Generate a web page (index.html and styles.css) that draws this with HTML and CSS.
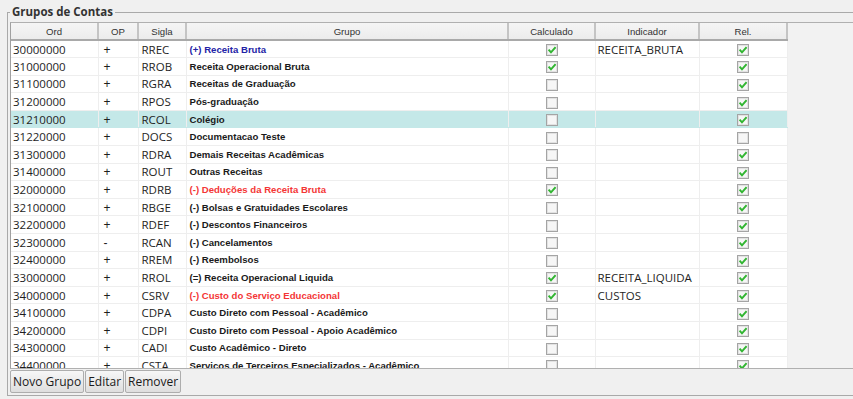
FILE: index.html
```html
<!DOCTYPE html>
<html lang="pt-BR">
<head>
<meta charset="utf-8">
<title>Grupos de Contas</title>
<link rel="stylesheet" href="styles.css">
</head>
<body>
<fieldset class="group">
  <legend class="group-title">Grupos de Contas</legend>
  <div class="scroll">
    <table class="grid">
      <colgroup>
        <col class="c-ord"><col class="c-op"><col class="c-sigla"><col class="c-grupo"><col class="c-calc"><col class="c-ind"><col class="c-rel">
      </colgroup>
      <thead>
        <tr><th>Ord</th><th>OP</th><th>Sigla</th><th>Grupo</th><th>Calculado</th><th>Indicador</th><th>Rel.</th></tr>
      </thead>
      <tbody>
        <tr><td class="ord">30000000</td><td class="op">+</td><td class="sig">RREC</td><td class="grp blue">(+) Receita Bruta</td><td class="chk"><span class="cb on"></span></td><td class="ind">RECEITA_BRUTA</td><td class="chk"><span class="cb on"></span></td></tr>
        <tr><td class="ord">31000000</td><td class="op">+</td><td class="sig">RROB</td><td class="grp">Receita Operacional Bruta</td><td class="chk"><span class="cb on"></span></td><td class="ind"></td><td class="chk"><span class="cb on"></span></td></tr>
        <tr><td class="ord">31100000</td><td class="op">+</td><td class="sig">RGRA</td><td class="grp">Receitas de Graduação</td><td class="chk"><span class="cb"></span></td><td class="ind"></td><td class="chk"><span class="cb on"></span></td></tr>
        <tr><td class="ord">31200000</td><td class="op">+</td><td class="sig">RPOS</td><td class="grp">Pós-graduação</td><td class="chk"><span class="cb"></span></td><td class="ind"></td><td class="chk"><span class="cb on"></span></td></tr>
        <tr class="sel"><td class="ord">31210000</td><td class="op">+</td><td class="sig">RCOL</td><td class="grp">Colégio</td><td class="chk"><span class="cb"></span></td><td class="ind"></td><td class="chk"><span class="cb on"></span></td></tr>
        <tr><td class="ord">31220000</td><td class="op">+</td><td class="sig">DOCS</td><td class="grp">Documentacao Teste</td><td class="chk"><span class="cb"></span></td><td class="ind"></td><td class="chk"><span class="cb"></span></td></tr>
        <tr><td class="ord">31300000</td><td class="op">+</td><td class="sig">RDRA</td><td class="grp">Demais Receitas Acadêmicas</td><td class="chk"><span class="cb"></span></td><td class="ind"></td><td class="chk"><span class="cb on"></span></td></tr>
        <tr><td class="ord">31400000</td><td class="op">+</td><td class="sig">ROUT</td><td class="grp">Outras Receitas</td><td class="chk"><span class="cb"></span></td><td class="ind"></td><td class="chk"><span class="cb on"></span></td></tr>
        <tr><td class="ord">32000000</td><td class="op">+</td><td class="sig">RDRB</td><td class="grp red">(-) Deduções da Receita Bruta</td><td class="chk"><span class="cb on"></span></td><td class="ind"></td><td class="chk"><span class="cb on"></span></td></tr>
        <tr><td class="ord">32100000</td><td class="op">+</td><td class="sig">RBGE</td><td class="grp">(-) Bolsas e Gratuidades Escolares</td><td class="chk"><span class="cb"></span></td><td class="ind"></td><td class="chk"><span class="cb on"></span></td></tr>
        <tr><td class="ord">32200000</td><td class="op">+</td><td class="sig">RDEF</td><td class="grp">(-) Descontos Financeiros</td><td class="chk"><span class="cb"></span></td><td class="ind"></td><td class="chk"><span class="cb on"></span></td></tr>
        <tr><td class="ord">32300000</td><td class="op">-</td><td class="sig">RCAN</td><td class="grp">(-) Cancelamentos</td><td class="chk"><span class="cb"></span></td><td class="ind"></td><td class="chk"><span class="cb on"></span></td></tr>
        <tr><td class="ord">32400000</td><td class="op">+</td><td class="sig">RREM</td><td class="grp">(-) Reembolsos</td><td class="chk"><span class="cb"></span></td><td class="ind"></td><td class="chk"><span class="cb on"></span></td></tr>
        <tr><td class="ord">33000000</td><td class="op">+</td><td class="sig">RROL</td><td class="grp">(=) Receita Operacional Liquida</td><td class="chk"><span class="cb on"></span></td><td class="ind">RECEITA_LIQUIDA</td><td class="chk"><span class="cb on"></span></td></tr>
        <tr><td class="ord">34000000</td><td class="op">+</td><td class="sig">CSRV</td><td class="grp red">(-) Custo do Serviço Educacional</td><td class="chk"><span class="cb on"></span></td><td class="ind">CUSTOS</td><td class="chk"><span class="cb on"></span></td></tr>
        <tr><td class="ord">34100000</td><td class="op">+</td><td class="sig">CDPA</td><td class="grp">Custo Direto com Pessoal - Acadêmico</td><td class="chk"><span class="cb"></span></td><td class="ind"></td><td class="chk"><span class="cb on"></span></td></tr>
        <tr><td class="ord">34200000</td><td class="op">+</td><td class="sig">CDPI</td><td class="grp">Custo Direto com Pessoal - Apoio Acadêmico</td><td class="chk"><span class="cb"></span></td><td class="ind"></td><td class="chk"><span class="cb on"></span></td></tr>
        <tr><td class="ord">34300000</td><td class="op">+</td><td class="sig">CADI</td><td class="grp">Custo Acadêmico - Direto</td><td class="chk"><span class="cb"></span></td><td class="ind"></td><td class="chk"><span class="cb on"></span></td></tr>
        <tr><td class="ord">34400000</td><td class="op">+</td><td class="sig">CSTA</td><td class="grp">Servicos de Terceiros Especializados - Acadêmico</td><td class="chk"><span class="cb"></span></td><td class="ind"></td><td class="chk"><span class="cb on"></span></td></tr>
      </tbody>
    </table>
  </div>
  <div class="buttons">
    <button class="btn" type="button">Novo Grupo</button>
    <button class="btn" type="button">Editar</button>
    <button class="btn" type="button">Remover</button>
  </div>
</fieldset>
</body>
</html>
```
FILE: styles.css
```css
html, body {
  margin: 0;
  padding: 0;
  background: #f0f0f0;
  overflow: hidden;
  width: 853px;
  height: 399px;
  font-family: "Open Sans", "Noto Sans", sans-serif;
  color: #1e1e1e;
}

.group {
  margin: 4px 0 0 7px;
  padding: 2px 0 1px 2px;
  width: 880px;
  box-sizing: border-box;
  border: 1px solid #a9a9a9;
  min-inline-size: 0;
}

.group-title {
  padding: 0 2px;
  font-family: "Open Sans", sans-serif;
  font-weight: 700;
  font-size: 11.5px;
  line-height: 16px;
  color: #333;
}

.scroll {
  height: 347px;
  box-sizing: border-box;
  border: 1px solid #b0b0b0;
  border-left-color: #a0a0a0;
  overflow: hidden;
  background: #f2f2f2;
}

.grid {
  border-collapse: collapse;
  table-layout: fixed;
  width: 776px;
}

.c-ord { width: 87px; }
.c-op { width: 40px; }
.c-sigla { width: 48px; }
.c-grupo { width: 322px; }
.c-calc { width: 87px; }
.c-ind { width: 104px; }
.c-rel { width: 88px; }

.grid th {
  height: 17px;
  padding: 0;
  box-sizing: border-box;
  background: linear-gradient(#f5f5f5, #ececec);
  border-right: 2px solid #c4c4c4;
  border-bottom: 2px solid #a9a9a9;
  font-family: "Liberation Sans", Arial, sans-serif;
  font-weight: 400;
  font-size: 9.6px;
  color: #333;
  text-align: center;
  vertical-align: middle;
}

.grid td {
  height: 17.6px;
  padding: 1px 0 0;
  box-sizing: border-box;
  background: #fff;
  border-right: 1px solid #eeeeee;
  border-bottom: 1px solid #eeeeee;
  font-size: 11.5px;
  line-height: 14px;
  white-space: nowrap;
  overflow: hidden;
  vertical-align: middle;
  color: #1e1e1e;
}

.grid tr.sel td {
  background: #c4e8e8;
  border-bottom-color: #c4e8e8;
}

.grid td.ord { padding-left: 2px; }
.grid td.op {
  padding-left: 5px;
  font-family: "Liberation Sans", Arial, sans-serif;
  font-size: 12px;
  color: #1e1e1e;
}
.grid td.sig { padding-left: 3px; }
.grid td.ind { padding-left: 2px; }

.grid td.grp {
  padding-left: 3px;
  font-family: "Liberation Sans", Arial, sans-serif;
  font-weight: 700;
  font-size: 9.6px;
  color: #1a1a1a;
}

.grid td.grp.blue { color: #2323a6; }
.grid td.grp.red { color: #f43636; }

.grid td.chk { text-align: center; padding-top: 0; }

.cb {
  display: inline-block;
  width: 12px;
  height: 12px;
  box-sizing: border-box;
  border: 1px solid #a4a4a4;
  box-shadow: inset 0 0 0 1px #e2e2e2;
  background: #f6f6f6;
  vertical-align: middle;
}

.cb.on {
  background: #f6f6f6 url("data:image/svg+xml;utf8,<svg xmlns='http://www.w3.org/2000/svg' width='10' height='10' viewBox='0 0 10 10'><path d='M1.6 4.6 L4 7.3 L8.6 2.2' fill='none' stroke='%2331b531' stroke-width='2'/></svg>") center / 10px 10px no-repeat;
}

.buttons {
  display: flex;
  gap: 1px;
  padding-top: 1px;
  padding-bottom: 1px;
}

.btn {
  height: 23px;
  padding: 0 2px;
  margin: 0;
  box-sizing: border-box;
  border: 1px solid #adadad;
  border-radius: 2px;
  background: linear-gradient(#f7f7f7, #dedede);
  font-family: "Open Sans", sans-serif;
  font-size: 12px;
  color: #1a1a1a;
  line-height: 20px;
}
```
